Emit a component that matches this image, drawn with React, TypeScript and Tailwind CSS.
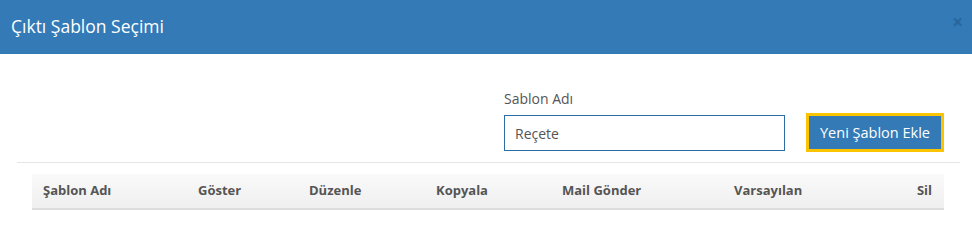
import React from "react";

const COLUMNS: { label: string; width: string }[] = [
  { label: "Şablon Adı", width: "w-[155px]" },
  { label: "Göster", width: "w-[111px]" },
  { label: "Düzenle", width: "w-[127px]" },
  { label: "Kopyala", width: "w-[126px]" },
  { label: "Mail Gönder", width: "w-[172px]" },
  { label: "Varsayılan", width: "flex-1" },
];

export default function App() {
  return (
    <div className="w-[972px] h-[233px] bg-white overflow-hidden" style={{ fontFamily: '"Open Sans", sans-serif' }}>
      {/* Modal başlığı */}
      <div className="h-[54px] bg-[#337ab7] flex items-center justify-between pl-[11px] pr-[9px]">
        <h4 className="text-white text-[17.5px] leading-none pb-[1px]">Çıktı Şablon Seçimi</h4>
        <button className="text-[#22598a] text-[19px] leading-none font-bold opacity-60 pb-[10px]">×</button>
      </div>

      <div className="px-[17px] pr-[12px]">
        {/* Form */}
        <div className="flex justify-end items-end pt-[38px] pb-[10px] pr-[16px]">
          <div className="flex flex-col w-[281px] mr-[21px]">
            <label className="text-[14px] text-[#555] leading-none mb-[9px]">Sablon Adı</label>
            <input
              defaultValue="Reçete"
              className="h-[36px] border border-[#2d6da3] px-[10px] text-[14px] text-[#555] outline-none mb-[1px]"
            />
          </div>
          <button className="h-[39px] w-[138px] border-[3px] border-[#fcc400] bg-[#337ab7] text-white text-[14.5px] flex items-center justify-center">
            Yeni Şablon Ekle
          </button>
        </div>

        <div className="border-t border-[#e5e5e5]" />

        {/* Tablo başlığı */}
        <div className="mt-[11px] ml-[15px] mr-[16px] h-[36px] flex items-center bg-gradient-to-b from-[#fafafa] to-[#efefef] border-b-2 border-[#dddddd] text-[13px] font-bold text-[#555]">
          {COLUMNS.map((c) => (
            <div key={c.label} className={`${c.width} pl-[11px]`}>
              {c.label}
            </div>
          ))}
          <div className="pr-[12px]">Sil</div>
        </div>
      </div>
    </div>
  );
}
